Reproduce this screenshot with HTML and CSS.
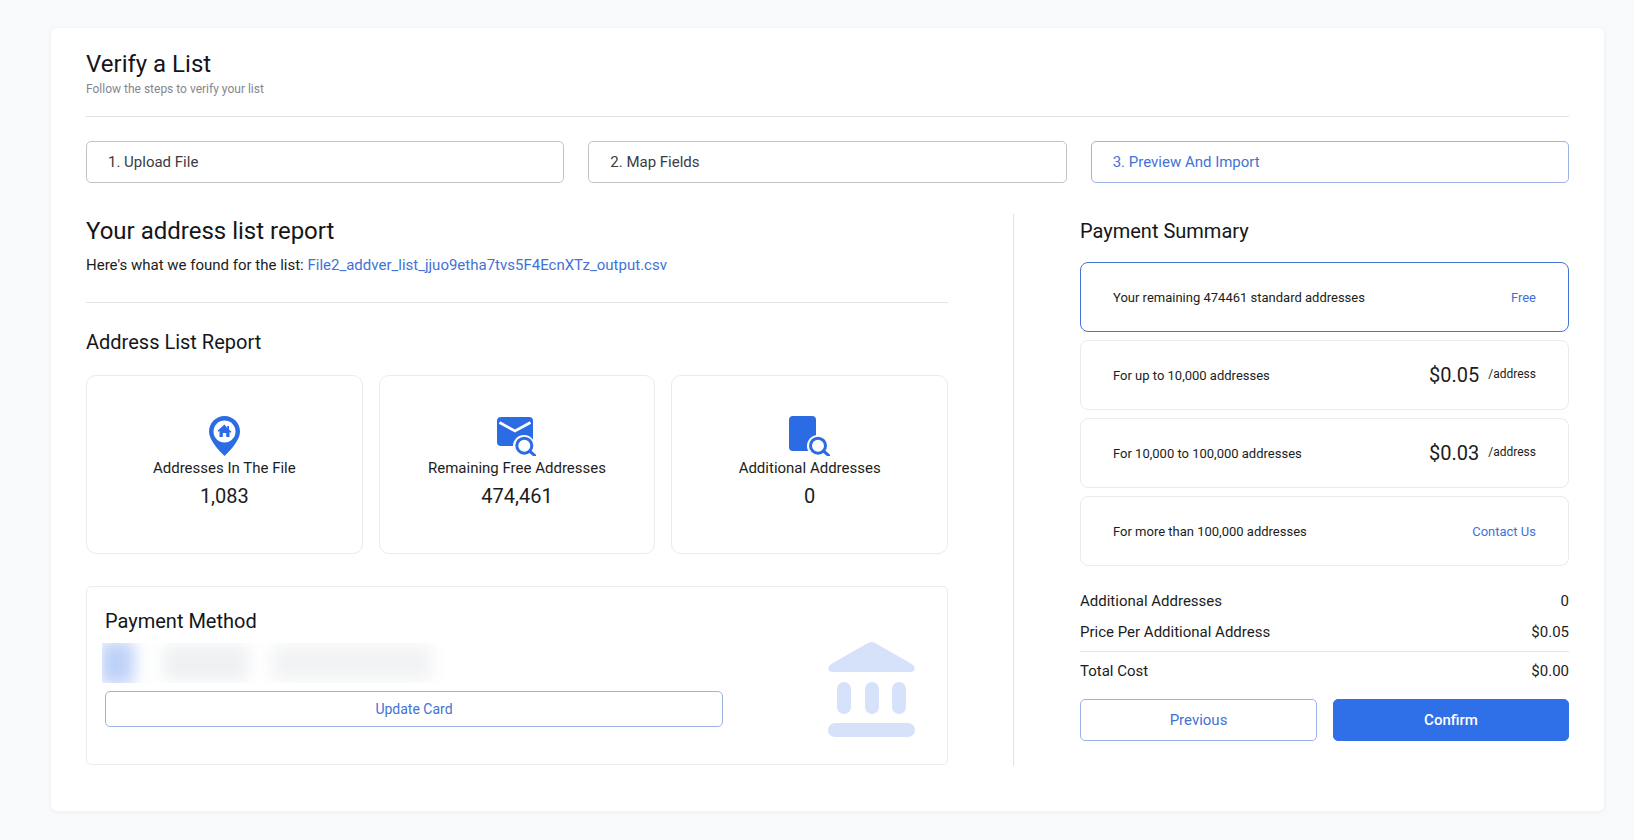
FILE: index.html
```html
<!DOCTYPE html>
<html lang="en">
<head>
<meta charset="utf-8">
<title>Verify a List</title>
<link rel="stylesheet" href="styles.css">
</head>
<body>
<main class="panel">
  <header class="page-head">
    <h1 class="page-title">Verify a List</h1>
    <p class="page-sub">Follow the steps to verify your list</p>
  </header>
  <nav class="steps">
    <div class="step">1. Upload File</div>
    <div class="step">2. Map Fields</div>
    <div class="step step-active">3. Preview And Import</div>
  </nav>
  <div class="columns">
    <section class="col-left">
      <h2 class="heading">Your address list report</h2>
      <p class="found">Here's what we found for the list: <a class="link">File2_addver_list_jjuo9etha7tvs5F4EcnXTz_output.csv</a></p>
      <hr class="rule rule-report">
      <h3 class="subheading">Address List Report</h3>
      <div class="stats">
        <div class="stat">
          <svg class="stat-icon" width="31" height="40" viewBox="0 0 31 40"><path fill="#2b6be4" d="M15.5 0C7 0 0 7 0 15.5 0 24 9 33.500 15.500 40 22 33.500 31 24 31 15.500 31 7 24 0 15.500 0z"/><circle cx="15.500" cy="15.500" r="11" fill="#fff"/><path fill="#2b6be4" d="M15.500 8.500l-7 6.300.9 1 1.100-.9V21h3.300v-4h3.400v4h3.300v-5.100l1.100.9.900-1-2.500-2.300V10h-1.800v1.900z"/></svg>
          <div class="stat-label">Addresses In The File</div>
          <div class="stat-value">1,083</div>
        </div>
        <div class="stat">
          <svg class="stat-icon" width="39" height="40" viewBox="0 0 39 40"><rect x="0" y="1" width="36" height="29" rx="4" fill="#2b6be4"/><path d="M2.500 6.500 18 15 33.500 6.500" fill="none" stroke="#fff" stroke-width="2.600"/><circle cx="27" cy="30" r="11" fill="#fff"/><circle cx="27.300" cy="29.700" r="7.500" fill="#fff" stroke="#2b6be4" stroke-width="3"/><path d="M32.500 35l5.500 4.800" stroke="#2b6be4" stroke-width="3" stroke-linecap="round"/></svg>
          <div class="stat-label">Remaining Free Addresses</div>
          <div class="stat-value">474,461</div>
        </div>
        <div class="stat">
          <svg class="stat-icon" width="41" height="40" viewBox="0 0 41 40"><rect x="0" y="0" width="27" height="35" rx="4" fill="#2b6be4"/><circle cx="29" cy="30" r="11" fill="#fff"/><circle cx="29" cy="29.700" r="7.500" fill="#fff" stroke="#2b6be4" stroke-width="3"/><path d="M34.500 35l5.500 4.800" stroke="#2b6be4" stroke-width="3" stroke-linecap="round"/></svg>
          <div class="stat-label">Additional Addresses</div>
          <div class="stat-value">0</div>
        </div>
      </div>
      <div class="method">
        <div class="method-main">
          <h3 class="method-title">Payment Method</h3>
          <div class="blurred" aria-hidden="true">
            <div class="blur-inner">
              <span class="blur-chip"></span>
              <span class="blur-bar blur-short"></span>
              <span class="blur-bar blur-long"></span>
            </div>
          </div>
          <button class="btn btn-outline btn-update">Update Card</button>
        </div>
        <svg class="bank" width="87" height="95" viewBox="0 0 87 95"><path fill="#d5e2fa" d="M39.500 1.200C42-.4 45-.4 47.500 1.200L83 21.500C88 24.500 88 30 82 30H5C-1 30-1 24.500 4 21.500z"/><rect x="9" y="40" width="14" height="32" rx="7" fill="#d5e2fa"/><rect x="37" y="40" width="14" height="32" rx="7" fill="#d5e2fa"/><rect x="64" y="40" width="14" height="32" rx="7" fill="#d5e2fa"/><rect x="0" y="81" width="87" height="14" rx="7" fill="#d5e2fa"/></svg>
      </div>
    </section>
    <section class="col-right">
      <h2 class="heading heading-small">Payment Summary</h2>
      <ul class="tiers">
        <li class="tier tier-active"><span>Your remaining 474461 standard addresses</span><a class="link">Free</a></li>
        <li class="tier"><span>For up to 10,000 addresses</span><span class="price"><b class="amount">$0.05</b><small class="unit">/address</small></span></li>
        <li class="tier"><span>For 10,000 to 100,000 addresses</span><span class="price"><b class="amount">$0.03</b><small class="unit">/address</small></span></li>
        <li class="tier"><span>For more than 100,000 addresses</span><a class="link">Contact Us</a></li>
      </ul>
      <div class="totals">
        <div class="total-row"><span>Additional Addresses</span><span>0</span></div>
        <div class="total-row"><span>Price Per Additional Address</span><span>$0.05</span></div>
        <hr class="rule">
        <div class="total-row total-final"><span>Total Cost</span><span>$0.00</span></div>
      </div>
      <div class="actions">
        <button class="btn btn-outline btn-big">Previous</button>
        <button class="btn btn-primary btn-big">Confirm</button>
      </div>
    </section>
  </div>
</main>
</body>
</html>
```
FILE: styles.css
```css
* { box-sizing: border-box; }
html, body { margin: 0; height: 100%; }
body {
  background: #f8f9fb;
  font-family: Roboto, "Liberation Sans", sans-serif;
  color: #1b1d21;
  padding: 28px 30px 29px 51px;
  overflow: hidden;
}
h1, h2, h3, p, ul { margin: 0; padding: 0; font-weight: 400; }
ul { list-style: none; }
.rule { border: 0; border-top: 1px solid #e2e4e9; margin: 0; }

.panel {
  background: #fff;
  border-radius: 6px;
  box-shadow: 0 1px 4px rgba(30, 40, 70, .05);
  height: 783px;
  padding: 20px 35px 0;
}
.page-head { height: 69px; border-bottom: 1px solid #dfe1e6; }
.page-title { font-size: 24px; line-height: 32px; color: #14161a; }
.page-sub { font-size: 12px; line-height: 16px; margin-top: 1px; color: #85878d; }

.steps { display: grid; grid-template-columns: repeat(3, 1fr); gap: 24px; margin-top: 24px; }
.step {
  height: 42px;
  border: 1px solid #c0c3c9;
  border-radius: 5px;
  padding-left: 21px;
  font-size: 15px;
  line-height: 40px;
  color: #3a3c42;
}
.step-active { border-color: #9db3e2; color: #4372d6; }

.columns { display: flex; margin-top: 31px; height: 552px; }
.col-left { width: 928px; padding-right: 65px; border-right: 1px solid #dfe1e6; }
.col-right { flex: 1; padding-left: 66px; }

.heading { font-size: 24px; line-height: 30px; margin-top: 2px; color: #14161a; }
.heading-small { font-size: 20px; }
.found { font-size: 15px; line-height: 20px; margin-top: 9px; }
.link { color: #4372d6; }
.rule.rule-report { margin-top: 27px; }
.subheading { font-size: 20px; line-height: 26px; margin-top: 26px; color: #14161a; }

.stats { display: grid; grid-template-columns: repeat(3, 1fr); gap: 16px; margin-top: 20px; }
.stat {
  height: 179px;
  border: 1px solid #e9ebee;
  border-radius: 10px;
  padding-top: 40px;
  text-align: center;
}
.stat-icon { display: block; margin: 0 auto; }
.stat-label { font-size: 15px; line-height: 20px; margin-top: 2px; }
.stat-value { font-size: 20px; line-height: 26px; margin-top: 5px; }

.method {
  display: flex;
  height: 179px;
  margin-top: 32px;
  border: 1px solid #e9ebee;
  border-radius: 5px;
  padding: 21px 32px 0 18px;
  justify-content: space-between;
}
.method-main { width: 618px; }
.method-title { font-size: 20px; line-height: 26px; color: #14161a; }
.blurred {
  width: 345px;
  height: 40px;
  margin: 9px 0 8px -3px;
  overflow: hidden;
}
.blur-inner {
  display: flex;
  align-items: center;
  height: 40px;
  filter: blur(8px);
}
.blur-chip { width: 34px; height: 44px; margin-left: -2px; background: #bdd0f8; }
.blur-bar { height: 36px; background: #eef0f2; }
.blur-short { width: 84px; margin-left: 30px; }
.blur-long { width: 160px; margin-left: 24px; background: #f2f3f4; }
.bank { margin-top: 34px; }

.btn {
  display: block;
  font-family: inherit;
  border-radius: 5px;
  cursor: pointer;
}
.btn-outline { background: #fff; border: 1px solid #9db3e2; color: #4372d6; }
.btn-primary { background: #2f6fe8; border: 1px solid #2f6fe8; color: #fff; font-weight: 500; }
.btn-update { width: 100%; height: 36px; font-size: 14px; }
.btn-big { height: 42px; font-size: 15px; }

.tiers { margin-top: 16px; display: flex; flex-direction: column; gap: 8px; }
.tier {
  display: flex;
  justify-content: space-between;
  align-items: center;
  height: 70px;
  border: 1px solid #e9ebee;
  border-radius: 8px;
  padding: 0 32px;
  font-size: 13px;
}
.tier-active { border-color: #4474d4; }
.price { display: flex; align-items: center; }
.amount { font-size: 20px; font-weight: 400; }
.unit { font-size: 12px; margin-left: 9px; margin-top: -3px; }

.totals { margin-top: 25px; font-size: 15px; }
.total-row { display: flex; justify-content: space-between; line-height: 20px; margin-bottom: 11px; }
.total-row + .rule { margin-top: -2px; }
.total-final { margin: 9px 0 0; }

.actions { display: grid; grid-template-columns: 237px 236px; gap: 16px; margin-top: 18px; }
```
